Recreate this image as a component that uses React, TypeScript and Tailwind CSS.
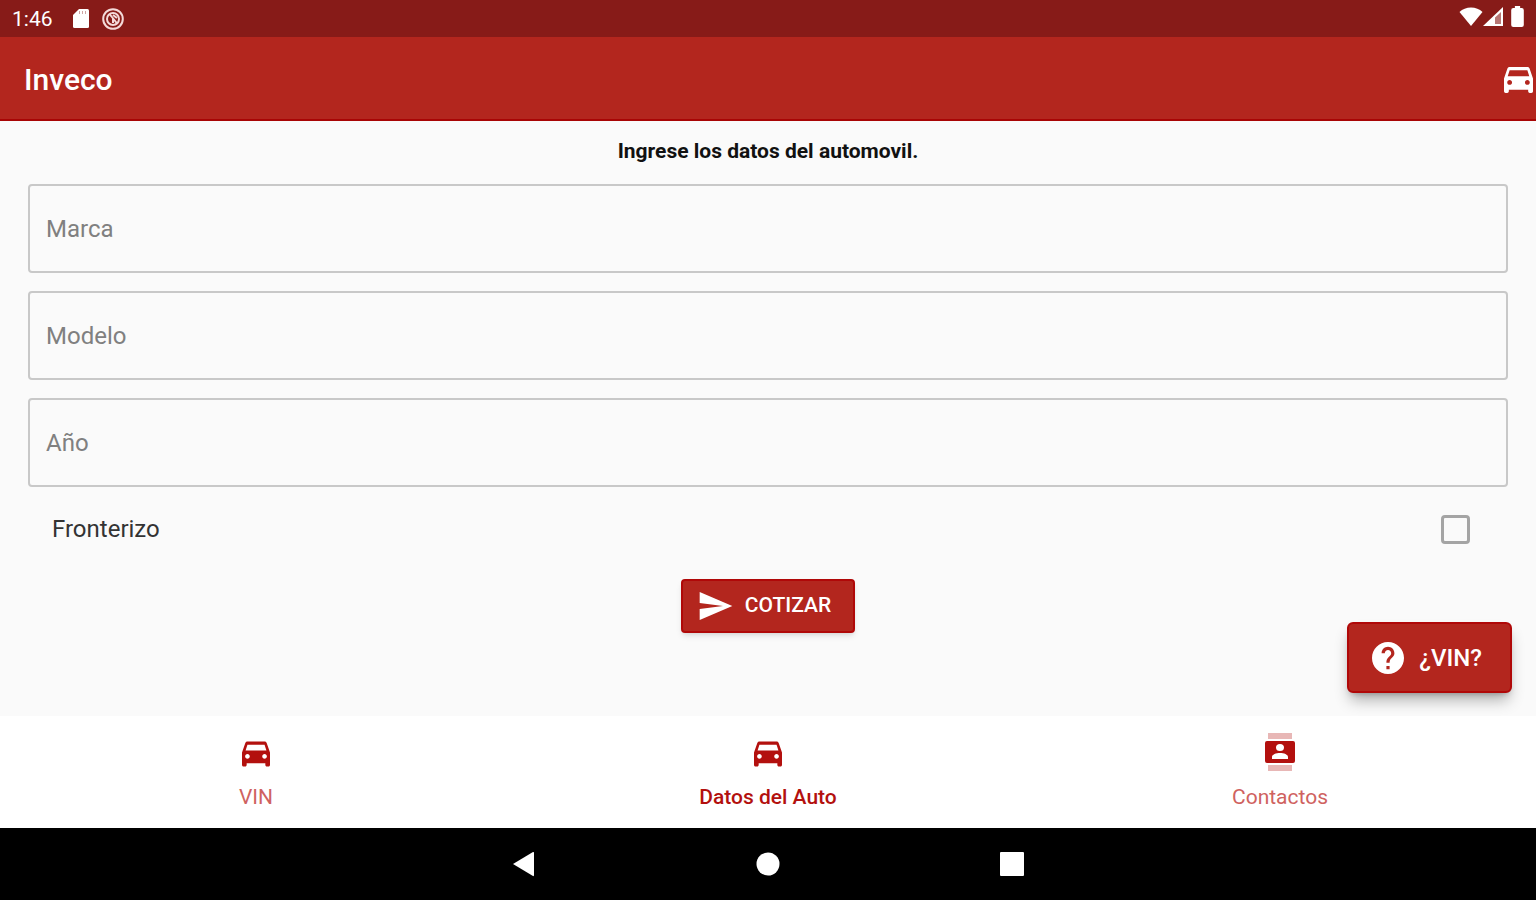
import { useState } from 'react'
import clsx from 'clsx'

type TabId = 'vin' | 'auto' | 'contactos'

const FIELDS = [
  { id: 'marca', label: 'Marca' },
  { id: 'modelo', label: 'Modelo' },
  { id: 'anio', label: 'Año' },
]

function CarIcon({ className }: { className?: string }) {
  return (
    <svg viewBox="3 4 18 16" fill="currentColor" className={className} aria-hidden="true">
      <path d="M18.92 5.01C18.72 4.42 18.16 4 17.5 4h-11c-.66 0-1.21.42-1.42 1.01L3 11v8c0 .55.45 1 1 1h1c.55 0 1-.45 1-1v-1h12v1c0 .55.45 1 1 1h1c.55 0 1-.45 1-1v-8l-2.08-5.99zM6.5 15c-.83 0-1.5-.67-1.5-1.5S5.67 12 6.5 12s1.5.67 1.5 1.5S7.33 15 6.5 15zm11 0c-.83 0-1.5-.67-1.5-1.5s.67-1.5 1.5-1.5 1.5.67 1.5 1.5-.67 1.5-1.5 1.5zM5.300 9.700l1.200-3.700h11l1.200 3.700z" />
    </svg>
  )
}

function ContactsIcon({ className }: { className?: string }) {
  return (
    <svg viewBox="0 0 30 38" fill="currentColor" className={className} aria-hidden="true">
      <path d="M3 0h24v6H3zM3 32h24v6H3z" opacity="0.3" />
      <path
        fillRule="evenodd"
        d="M2 8h26a2 2 0 0 1 2 2v18a2 2 0 0 1-2 2H2a2 2 0 0 1-2-2V10a2 2 0 0 1 2-2zm13 3a4 3.5 0 1 0 0 7 4 3.500 0 0 0 0-7zM7 26h16v-2c0-2.500-4-4-8-4s-8 1.500-8 4z"
      />
    </svg>
  )
}

/** System bar with the clock and notification icons. */
function StatusBar() {
  return (
    <div className="flex h-[37px] items-center justify-between bg-[#871b18] px-3 text-white">
      <div className="flex items-center">
        <span className="text-[21px] leading-6">1:46</span>
        <svg viewBox="0 0 16 19" className="ml-5 h-[19px] w-4" fill="#fff" aria-hidden="true">
          <path d="M6 0h8.500A1.500 1.500 0 0 1 16 1.500v16a1.500 1.500 0 0 1-1.500 1.500h-13A1.500 1.500 0 0 1 0 17.500V6z" />
          <path d="M6.500 2v3M9.500 2v3M12.500 2v3" stroke="#871b18" strokeOpacity="0.4" />
        </svg>
        <svg viewBox="0 0 24 24" className="ml-3 size-6" fill="none" stroke="#f4dad9" aria-hidden="true">
          <circle cx="12" cy="12" r="9.800" strokeWidth="2" />
          <circle cx="12" cy="12" r="6" strokeWidth="2" />
          <path d="M8.500 7l8 10M12 11v5M12 8l4 3" strokeWidth="2" />
        </svg>
      </div>
      <div className="flex items-center pb-1">
        <svg viewBox="0 0 24 19" className="h-[19px] w-6" fill="#fff" aria-hidden="true">
          <path d="M12 19 .5 5C3.500 2 7.500.500 12 .500S20.500 2 23.500 5z" />
        </svg>
        <svg viewBox="0 0 20 19" className="h-[19px] w-5" aria-hidden="true">
          <path d="M0 19 20 0v19z" fill="#fff" />
          <path d="M12 10.500 18 5v12h-6z" fill="#871b18" fillOpacity="0.6" />
        </svg>
        <svg viewBox="0 0 12 20" className="ml-2 h-[21px] w-[13px]" fill="#fff" aria-hidden="true">
          <path d="M3.500 0h5v2H10a2 2 0 0 1 2 2v14a2 2 0 0 1-2 2H2a2 2 0 0 1-2-2V4a2 2 0 0 1 2-2h1.500z" />
        </svg>
      </div>
    </div>
  )
}

function QuoteForm() {
  const [border, setBorder] = useState(false)

  return (
    <form className="flex flex-col px-7 pt-4" onSubmit={(e) => e.preventDefault()}>
      <h2 className="text-center text-[21px] leading-7 font-bold text-[#111]">
        Ingrese los datos del automovil.
      </h2>
      <div className="mt-[19px] flex flex-col gap-[18px]">
        {FIELDS.map((field) => (
          <input
            key={field.id}
            id={field.id}
            name={field.id}
            aria-label={field.label}
            placeholder={field.label}
            className="h-[89px] w-full rounded-sm border-2 border-[#c8c8c8] bg-transparent px-4 text-2xl text-[#222] outline-none placeholder:text-[#808080] focus:border-[#b3261e]"
          />
        ))}
      </div>
      <div className="mt-6 flex items-center justify-between pr-[38px] pl-6">
        <label htmlFor="fronterizo" className="text-2xl leading-9 text-[#333]">
          Fronterizo
        </label>
        <input
          id="fronterizo"
          type="checkbox"
          checked={border}
          onChange={(e) => setBorder(e.target.checked)}
          className="size-[29px] appearance-none rounded-sm border-[3px] border-[#a4a4a4] checked:border-[#b3261e] checked:bg-[#b3261e]"
        />
      </div>
      <button
        type="submit"
        className="mt-8 flex h-[54px] items-center gap-3 self-center rounded-sm border-2 border-[#b00808] bg-[#b3261e] pr-[22px] pl-4 text-[21px] font-medium text-white shadow-md"
      >
        <svg viewBox="2 3 21 18" className="h-7 w-[34px]" fill="currentColor" aria-hidden="true">
          <path d="M2.010 21 23 12 2.010 3 2 10l15 2-15 2z" />
        </svg>
        COTIZAR
      </button>
    </form>
  )
}

function BottomTabs() {
  const [active, setActive] = useState<TabId>('auto')

  const tabs = [
    { id: 'vin' as const, label: 'VIN', icon: <CarIcon className="mt-1 h-[26px] w-7" /> },
    { id: 'auto' as const, label: 'Datos del Auto', icon: <CarIcon className="mt-1 h-[26px] w-7" /> },
    { id: 'contactos' as const, label: 'Contactos', icon: <ContactsIcon className="h-[38px] w-[30px]" /> },
  ]

  return (
    <nav className="grid h-28 grid-cols-3 bg-white">
      {tabs.map((tab) => (
        <button
          key={tab.id}
          type="button"
          onClick={() => setActive(tab.id)}
          className="flex flex-col items-center pt-4 text-[#b3100e]"
        >
          <span className="flex h-10 items-center">{tab.icon}</span>
          <span
            className={clsx(
              'mt-[13px] text-[21px] leading-6',
              active === tab.id ? 'font-medium' : 'text-[#cf625f]'
            )}
          >
            {tab.label}
          </span>
        </button>
      ))}
    </nav>
  )
}

/** Android back / home / recents keys. */
function SystemKeys() {
  return (
    <div className="flex h-[72px] items-center justify-center gap-[220px] bg-black text-white">
      <button type="button" aria-label="Atrás">
        <svg viewBox="0 0 24 26" className="h-[26px] w-6" fill="currentColor">
          <path d="M1 13 21 1q1-.5 1 1v22q0 1.500-1 1z" />
        </svg>
      </button>
      <button type="button" aria-label="Inicio">
        <svg viewBox="0 0 24 24" className="size-6" fill="currentColor">
          <circle cx="12" cy="12" r="11.500" />
        </svg>
      </button>
      <button type="button" aria-label="Recientes">
        <svg viewBox="0 0 24 24" className="size-6" fill="currentColor">
          <rect width="24" height="24" rx="1" />
        </svg>
      </button>
    </div>
  )
}

export default function App() {
  return (
    <div className="flex min-h-screen flex-col bg-[#fafafa] font-['Roboto',sans-serif]">
      <StatusBar />
      <header className="flex h-[84px] items-center justify-between border-b-2 border-[#a80505] bg-[#b3261e] pt-[3px] pr-[3px] pl-6 text-white">
        <h1 className="text-[30px] leading-9 font-medium">Inveco</h1>
        <button type="button" aria-label="Auto">
          <CarIcon className="h-[26px] w-[29px]" />
        </button>
      </header>
      <main className="relative flex-1">
        <QuoteForm />
        <button
          type="button"
          className="absolute right-6 bottom-[23px] flex h-[71px] items-center gap-[15px] rounded-md border-2 border-[#b00808] bg-[#b3261e] pr-7 pl-[23px] text-2xl font-medium text-white shadow-lg shadow-black/30"
        >
          <svg viewBox="2 2 20 20" className="size-8" fill="currentColor" aria-hidden="true">
            <path d="M12 2C6.480 2 2 6.480 2 12s4.480 10 10 10 10-4.480 10-10S17.520 2 12 2zm1 17h-2v-2h2v2zm2.070-7.750-.9.920C13.450 12.900 13 13.500 13 15h-2v-.5c0-1.100.45-2.100 1.170-2.830l1.240-1.260c.37-.36.590-.86.590-1.410 0-1.100-.9-2-2-2s-2 .9-2 2H8c0-2.210 1.790-4 4-4s4 1.790 4 4c0 .88-.36 1.680-.93 2.250z" />
          </svg>
          ¿VIN?
        </button>
      </main>
      <BottomTabs />
      <SystemKeys />
    </div>
  )
}
